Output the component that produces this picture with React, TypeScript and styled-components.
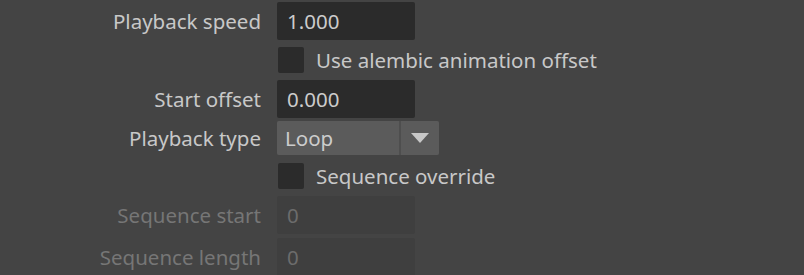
import React from 'react';
import styled, { createGlobalStyle, css } from 'styled-components';

const GlobalStyle = createGlobalStyle`
  html, body {
    margin: 0;
    padding: 0;
    background: #444444;
  }
  body {
    font-family: "Noto Sans", "Open Sans", sans-serif;
    font-size: 20.5px;
    line-height: 24px;
    color: #c8c8c8;
    overflow: hidden;
  }
`;

const Panel = styled.div`
  width: 804px;
  height: 275px;
  display: flex;
  flex-direction: column;
  padding-top: 2px;
  box-sizing: border-box;
`;

const Row = styled.div<{ $mt?: number; $mb?: number; $py?: number }>`
  display: grid;
  grid-template-columns: 261px 1fr;
  column-gap: 16px;
  align-items: center;
  margin-top: ${(p) => p.$mt ?? 0}px;
  margin-bottom: ${(p) => p.$mb ?? 0}px;
  padding: ${(p) => p.$py ?? 0}px 0;
`;

const Label = styled.span<{ $disabled?: boolean }>`
  text-align: right;
  white-space: nowrap;
  color: ${(p) => (p.$disabled ? '#767676' : '#c8c8c8')};
`;

const Field = styled.div<{ $disabled?: boolean }>`
  width: 138px;
  height: 38px;
  box-sizing: border-box;
  padding: 0 10px;
  display: flex;
  align-items: center;
  border-radius: 2px;
  background: #2b2b2b;
  color: #cccccc;
  ${(p) =>
    p.$disabled &&
    css`
      background: #3f3f3f;
      color: #6c6c6c;
    `}
`;

const CheckLine = styled.label`
  display: flex;
  align-items: center;
  gap: 12px;
  margin-left: 1px;
  color: #c8c8c8;
`;

const Box = styled.span`
  width: 26px;
  height: 26px;
  border-radius: 2px;
  background: #2b2b2b;
`;

const Select = styled.div`
  display: flex;
  width: 162px;
  height: 34px;
  border-radius: 2px;
  overflow: hidden;
  background: #4e4e4e;
  gap: 2px;
`;

const SelectValue = styled.div`
  flex: 1;
  background: #5b5b5b;
  display: flex;
  align-items: center;
  padding-left: 8px;
  color: #cccccc;
`;

const SelectArrow = styled.div`
  width: 38px;
  background: #5b5b5b;
  display: flex;
  align-items: center;
  justify-content: center;
`;

export default function App() {
  return (
    <>
      <GlobalStyle />
      <Panel>
        <Row>
          <Label>Playback speed</Label>
          <Field>1.000</Field>
        </Row>
        <Row $py={7}>
          <span />
          <CheckLine>
            <Box />
            Use alembic animation offset
          </CheckLine>
        </Row>
        <Row>
          <Label>Start offset</Label>
          <Field>0.000</Field>
        </Row>
        <Row $mt={3} $mb={1}>
          <Label>Playback type</Label>
          <Select>
            <SelectValue>Loop</SelectValue>
            <SelectArrow>
              <svg width="18" height="10" viewBox="0 0 18 10">
                <polygon points="0,0 18,0 9,10" fill="#c8c8c8" />
              </svg>
            </SelectArrow>
          </Select>
        </Row>
        <Row $py={7}>
          <span />
          <CheckLine>
            <Box />
            Sequence override
          </CheckLine>
        </Row>
        <Row>
          <Label $disabled>Sequence start</Label>
          <Field $disabled>0</Field>
        </Row>
        <Row $mt={4}>
          <Label $disabled>Sequence length</Label>
          <Field $disabled>0</Field>
        </Row>
      </Panel>
    </>
  );
}
